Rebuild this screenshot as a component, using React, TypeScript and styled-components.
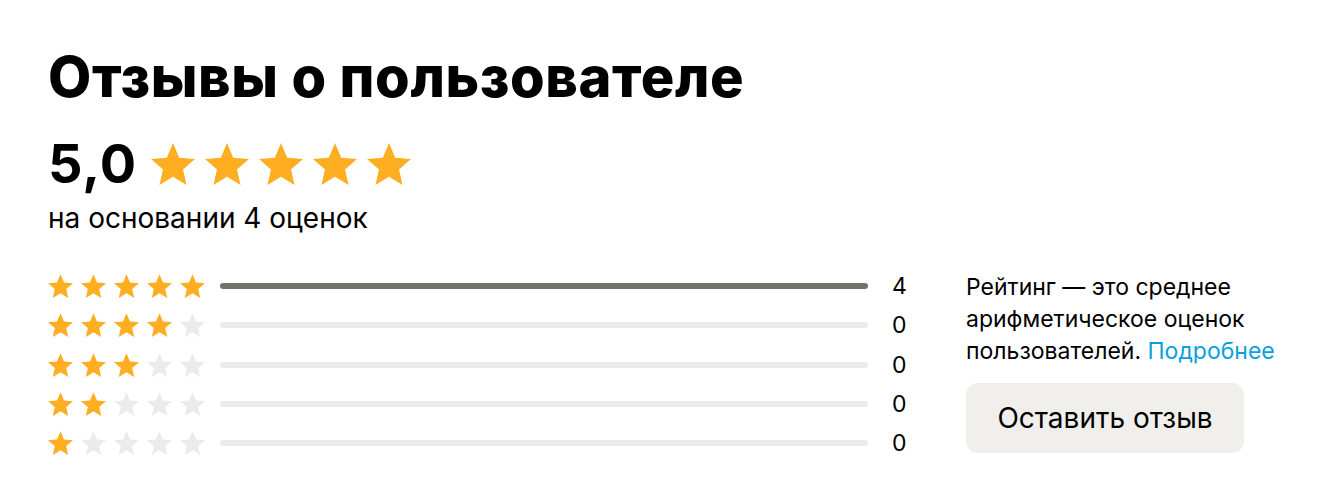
import React from "react";
import styled, { createGlobalStyle } from "styled-components";

const GlobalStyle = createGlobalStyle`
  body {
    margin: 0;
    background: #fff;
    font-family: Inter, "Noto Sans", sans-serif;
    color: #000;
  }
`;

const STAR_PATH =
  "M12 17.27L18.18 21l-1.64-7.03L22 9.24l-7.19-.61L12 2 9.19 8.63 2 9.24l5.46 4.73L5.82 21z";

const Page = styled.div`
  padding: 45px 48px 40px 48px;
`;

const Title = styled.h1`
  margin: 0;
  font-size: 56px;
  line-height: 64px;
  font-weight: 800;
  letter-spacing: 0.6px;
`;

const ScoreRow = styled.div`
  display: flex;
  align-items: center;
  gap: 14px;
  margin-top: 27px;
  height: 56px;
`;

const Score = styled.span`
  font-size: 54px;
  line-height: 56px;
  font-weight: 700;
  letter-spacing: 1px;
`;

const Stars = styled.div<{ $gap: number }>`
  display: flex;
  gap: ${(p) => p.$gap}px;
`;

const StarIcon = styled.svg<{ $on: boolean }>`
  display: block;
  fill: ${(p) => (p.$on ? "#ffae22" : "#ebebeb")};
`;

const Basis = styled.div`
  margin-top: 9px;
  font-size: 28px;
  line-height: 34px;
`;

const Body = styled.div`
  display: flex;
  align-items: flex-start;
  margin-top: 39px;
`;

const Breakdown = styled.div`
  display: flex;
  flex-direction: column;
  gap: 15.25px;
  width: 918px;
  flex: none;
`;

const BreakdownRow = styled.div`
  display: flex;
  align-items: center;
  height: 24px;
`;

const Track = styled.div<{ $filled: boolean }>`
  flex: none;
  width: 648px;
  height: 6px;
  margin-left: 15px;
  border-radius: 3px;
  background: ${(p) => (p.$filled ? "#74716d" : "#ebebeb")};
`;

const Count = styled.span`
  margin-left: 24px;
  font-size: 23px;
  line-height: 24px;
`;

const Aside = styled.div`
  width: 330px;
  margin-top: -3.5px;
`;

const Note = styled.p`
  margin: 0;
  font-size: 23px;
  line-height: 32px;
`;

const MoreLink = styled.a`
  color: #0a9fde;
  text-decoration: none;
`;

const ReviewButton = styled.button`
  display: block;
  margin-top: 16.5px;
  width: 278px;
  height: 70px;
  border: none;
  border-radius: 12px;
  background: #f0efeb;
  font-family: inherit;
  font-size: 28px;
  color: #000;
  cursor: pointer;
`;

const Star: React.FC<{ on: boolean; w: number; h: number }> = ({ on, w, h }) => (
  <StarIcon $on={on} width={w} height={h} viewBox="2 2 20 19">
    <path d={STAR_PATH} />
  </StarIcon>
);

const counts = [4, 0, 0, 0, 0];

export default function App() {
  return (
    <Page>
      <GlobalStyle />
      <Title>Отзывы о пользователе</Title>
      <ScoreRow>
        <Score>5,0</Score>
        <Stars $gap={10}>
          {[0, 1, 2, 3, 4].map((i) => (
            <Star key={i} on w={44} h={42} />
          ))}
        </Stars>
      </ScoreRow>
      <Basis>на основании 4 оценок</Basis>
      <Body>
        <Breakdown>
          {counts.map((count, idx) => {
            const rating = 5 - idx;
            return (
              <BreakdownRow key={rating}>
                <Stars $gap={8}>
                  {[1, 2, 3, 4, 5].map((n) => (
                    <Star key={n} on={n <= rating} w={25} h={24} />
                  ))}
                </Stars>
                <Track $filled={count > 0} />
                <Count>{count}</Count>
              </BreakdownRow>
            );
          })}
        </Breakdown>
        <Aside>
          <Note>
            Рейтинг — это среднее арифметическое оценок пользователей.{" "}
            <MoreLink href="#">Подробнее</MoreLink>
          </Note>
          <ReviewButton>Оставить отзыв</ReviewButton>
        </Aside>
      </Body>
    </Page>
  );
}
